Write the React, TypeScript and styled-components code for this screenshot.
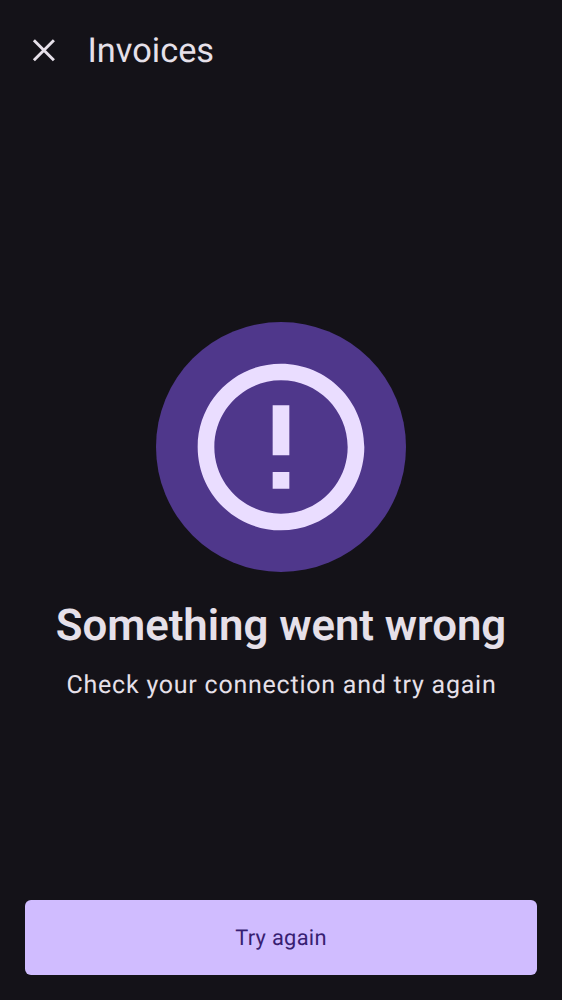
import React from "react";
import styled, { createGlobalStyle } from "styled-components";

const GlobalStyle = createGlobalStyle`
  * { box-sizing: border-box; }
  body { margin: 0; background: #141218; }
`;

const Screen = styled.div`
  display: flex;
  flex-direction: column;
  height: 100vh;
  min-height: 620px;
  background: #141218;
  color: #e6e0e9;
  font-family: Roboto, sans-serif;
  text-rendering: geometricPrecision;
`;

const TopBar = styled.header`
  display: flex;
  align-items: center;
  height: 100px;
  padding: 0 31px;
  gap: 31.5px;
`;

const CloseButton = styled.button`
  display: flex;
  padding: 0;
  border: 0;
  background: none;
  color: inherit;
`;

const Title = styled.h1`
  margin: 0;
  padding-top: 2px;
  font-size: 34.375px;
  line-height: 44px;
  font-weight: 400;
`;

const Content = styled.main`
  flex: 1;
  display: flex;
  flex-direction: column;
  align-items: center;
  padding-top: 222px;
`;

const IconDisc = styled.div`
  display: flex;
  align-items: center;
  justify-content: center;
  width: 250px;
  height: 250px;
  border-radius: 50%;
  background: #4f378b;
  color: #eaddff;
`;

const Headline = styled.h2`
  margin: 25px 0 0;
  font-size: 43.75px;
  line-height: 56px;
  font-weight: 600;
  letter-spacing: -0.03px;
  white-space: nowrap;
`;

const Message = styled.p`
  margin: 14px 0 0;
  padding-left: 1px;
  font-size: 25px;
  line-height: 38px;
  letter-spacing: 0.765px;
  white-space: nowrap;
`;

const Footer = styled.footer`
  padding: 0 25px 25px;
`;

const RetryButton = styled.button`
  width: 100%;
  height: 75px;
  padding: 2px 0 0;
  border: 0;
  border-radius: 6px;
  background: #d0bcff;
  color: #381e72;
  font: 400 21.875px/32px Roboto, sans-serif;
  letter-spacing: 0.28px;
  text-rendering: geometricPrecision;
`;

export default function App() {
  return (
    <>
      <GlobalStyle />
      <Screen>
        <TopBar>
          <CloseButton aria-label="Close">
            <svg width="25" height="25" viewBox="0 0 25 25" fill="none" stroke="currentColor" strokeWidth="2.9">
              <path d="M2.9 2.2 22.9 22.2M22.9 2.2 2.9 22.2" />
            </svg>
          </CloseButton>
          <Title>Invoices</Title>
        </TopBar>
        <Content>
          <IconDisc>
            <svg width="200" height="200" viewBox="0 0 24 24" fill="currentColor">
              <path d="M11 15h2v2h-2zm0-8h2v6h-2zm.99-5C6.47 2 2 6.48 2 12s4.47 10 9.99 10C17.52 22 22 17.52 22 12S17.52 2 11.99 2zM12 20c-4.42 0-8-3.58-8-8s3.58-8 8-8 8 3.58 8 8-3.58 8-8 8z" />
            </svg>
          </IconDisc>
          <Headline>Something went wrong</Headline>
          <Message>Check your connection and try again</Message>
        </Content>
        <Footer>
          <RetryButton>Try again</RetryButton>
        </Footer>
      </Screen>
    </>
  );
}
